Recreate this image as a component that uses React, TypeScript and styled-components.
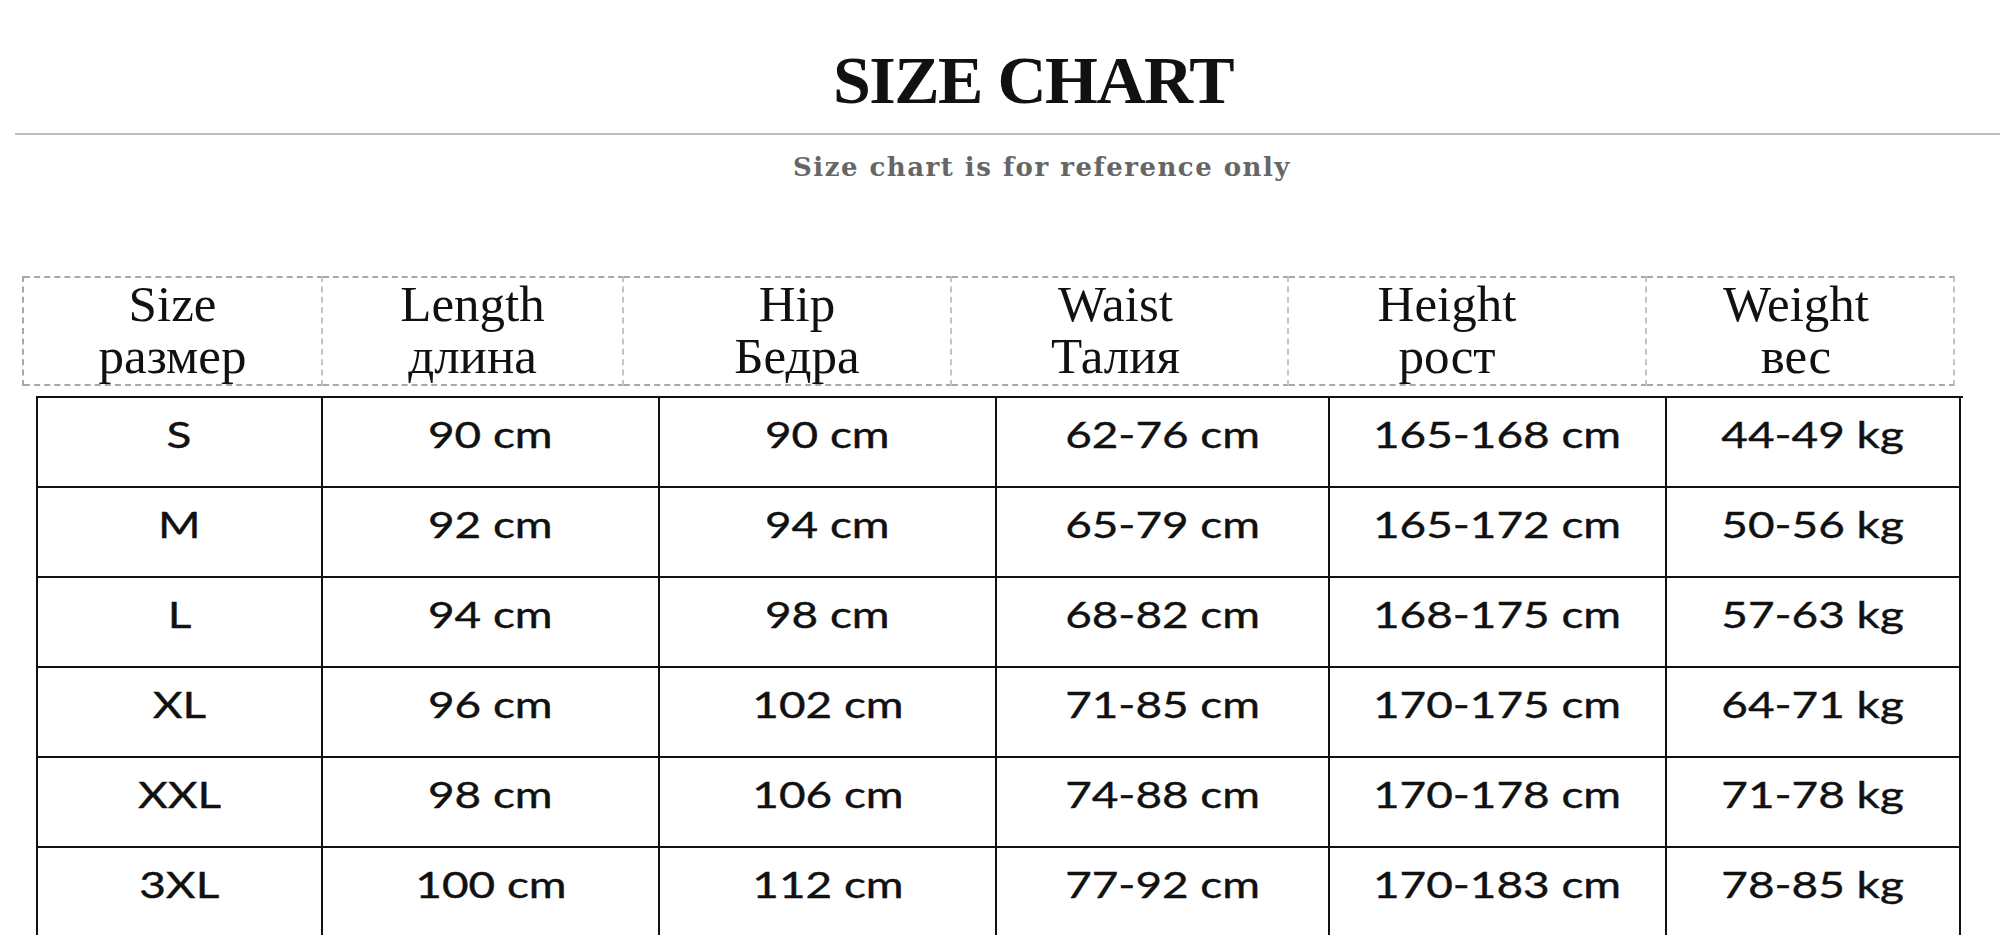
import React from 'react'
import styled, { createGlobalStyle } from 'styled-components'

const GlobalStyle = createGlobalStyle`
  html, body {
    margin: 0;
    padding: 0;
    background: #fff;
    overflow: hidden;
  }
`

const Page = styled.div`
  width: 2000px;
  height: 935px;
  overflow: hidden;
  background: #fff;
`

const Title = styled.h1`
  margin: 46px 0 0;
  padding-left: 66px;
  height: 68px;
  text-align: center;
  font-family: 'Liberation Serif', 'Times New Roman', serif;
  font-weight: 700;
  font-size: 68px;
  line-height: 68px;
  letter-spacing: -1.5px;
  color: #111;
`

const Rule = styled.div`
  margin: 19px 0 0 15px;
  height: 2px;
  background: #bdbdbd;
`

const Subtitle = styled.p`
  margin: 19px 0 0;
  padding-left: 84px;
  height: 26px;
  text-align: center;
  font-family: 'DejaVu Serif', serif;
  font-weight: 700;
  font-size: 26px;
  line-height: 26px;
  letter-spacing: 1.5px;
  color: #666;
`

const HeaderRow = styled.div`
  display: grid;
  grid-template-columns: 299px 301px 328px 337px 358px 308px;
  margin: 96px 0 0 22px;
  width: 1933px;
  border-left: 2px dashed #a8a8a8;
`

const HeaderCell = styled.div<{ $shift?: number }>`
  box-sizing: border-box;
  height: 110px;
  display: flex;
  flex-direction: column;
  align-items: center;
  border-top: 2px dashed #a8a8a8;
  border-bottom: 2px dashed #a8a8a8;
  border-right: 2px dashed #c4c4c4;
  padding-left: ${p => Math.max(0, (p.$shift || 0) * 2)}px;
  padding-right: ${p => Math.max(0, -(p.$shift || 0) * 2)}px;
  font-family: 'Liberation Serif', 'Times New Roman', serif;
  font-size: 51px;
  line-height: 52px;
  color: #111;
`

const Table = styled.div`
  display: grid;
  grid-template-columns: 285px 337px 337px 333px 337px 294px;
  grid-auto-rows: 90px;
  margin: 10px 0 0 36px;
  width: 1925px;
  border-left: 2px solid #111;
  border-top: 2px solid #111;
`

const Cell = styled.div`
  box-sizing: border-box;
  display: flex;
  justify-content: center;
  align-items: flex-start;
  padding-top: 17px;
  border-right: 2px solid #111;
  border-bottom: 2px solid #111;
`

const Value = styled.span`
  display: inline-block;
  font-family: Lato, 'Liberation Sans', sans-serif;
  font-size: 37px;
  line-height: 37px;
  color: #111;
  white-space: nowrap;
  -webkit-text-stroke: 0.4px #111;
  transform: scaleX(1.24);
`

const headers: { en: string; ru: string; shift?: number }[] = [
  { en: 'Size', ru: 'размер' },
  { en: 'Length', ru: 'длина' },
  { en: 'Hip', ru: 'Бедра', shift: 10 },
  { en: 'Waist', ru: 'Талия', shift: -4 },
  { en: 'Height', ru: 'рост', shift: -20 },
  { en: 'Weight', ru: 'вес', shift: -4 },
]

const rows = [
  ['S', '90 cm', '90 cm', '62-76 cm', '165-168 cm', '44-49 kg'],
  ['M', '92 cm', '94 cm', '65-79 cm', '165-172 cm', '50-56 kg'],
  ['L', '94 cm', '98 cm', '68-82 cm', '168-175 cm', '57-63 kg'],
  ['XL', '96 cm', '102 cm', '71-85 cm', '170-175 cm', '64-71 kg'],
  ['XXL', '98 cm', '106 cm', '74-88 cm', '170-178 cm', '71-78 kg'],
  ['3XL', '100 cm', '112 cm', '77-92 cm', '170-183 cm', '78-85 kg'],
]

const App: React.FC = () => (
  <Page>
    <GlobalStyle />
    <Title>SIZE CHART</Title>
    <Rule />
    <Subtitle>Size chart is for reference only</Subtitle>
    <HeaderRow>
      {headers.map(h => (
        <HeaderCell key={h.en} $shift={h.shift}>
          <span>{h.en}</span>
          <span>{h.ru}</span>
        </HeaderCell>
      ))}
    </HeaderRow>
    <Table>
      {rows.map(row =>
        row.map((v, i) => (
          <Cell key={row[0] + i}>
            <Value>{v}</Value>
          </Cell>
        ))
      )}
    </Table>
  </Page>
)

export default App
